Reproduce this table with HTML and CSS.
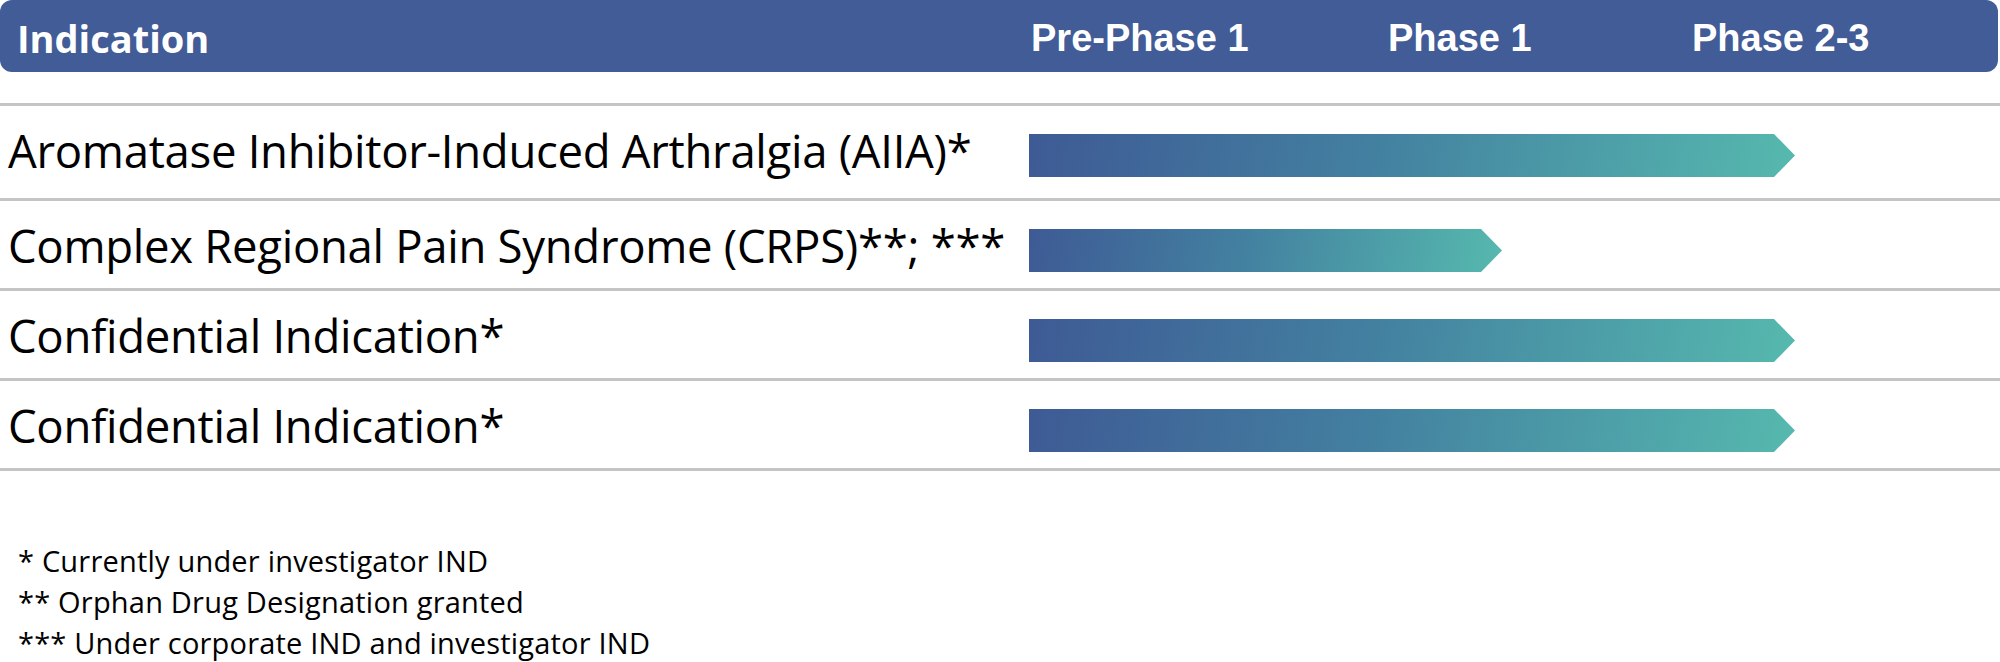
FILE: index.html
```html
<!DOCTYPE html>
<html lang="en">
<head>
<meta charset="utf-8">
<title>Pipeline</title>
<link rel="stylesheet" href="styles.css">
</head>
<body>
<div class="pipeline">
  <div class="head">
    <div class="head-ind">Indication</div>
    <div class="head-phase p0">Pre-Phase 1</div>
    <div class="head-phase p1">Phase 1</div>
    <div class="head-phase p2">Phase 2-3</div>
  </div>
  <div class="rows">
    <div class="row first">
      <div class="ind">Aromatase Inhibitor-Induced Arthralgia (AIIA)*</div>
      <div class="track"><div class="bar" style="width:766px"></div></div>
    </div>
    <div class="row">
      <div class="ind">Complex Regional Pain Syndrome (CRPS)**; ***</div>
      <div class="track"><div class="bar" style="width:473px"></div></div>
    </div>
    <div class="row">
      <div class="ind">Confidential Indication*</div>
      <div class="track"><div class="bar" style="width:766px"></div></div>
    </div>
    <div class="row">
      <div class="ind">Confidential Indication*</div>
      <div class="track"><div class="bar" style="width:766px"></div></div>
    </div>
  </div>
  <div class="notes">
    <p>* Currently under investigator IND</p>
    <p>** Orphan Drug Designation granted</p>
    <p>*** Under corporate IND and investigator IND</p>
  </div>
</div>
</body>
</html>
```
FILE: styles.css
```css
html, body {
  margin: 0;
  padding: 0;
  background: #ffffff;
}
.pipeline {
  width: 2000px;
  font-family: "Open Sans", "Liberation Sans", sans-serif;
  color: #000;
}
.head {
  width: 1998px;
  height: 72px;
  background: #415c96;
  border-radius: 12px;
  display: flex;
  align-items: flex-start;
  color: #fff;
  box-sizing: border-box;
}
.head-ind {
  width: 1029px;
  padding-left: 17px;
  padding-top: 5px;
  box-sizing: border-box;
  font-family: "Open Sans", sans-serif;
  font-weight: 700;
  font-size: 38px;
  line-height: 67px;
  letter-spacing: 0;
}
.head-phase {
  font-family: "Liberation Sans", Arial, sans-serif;
  font-weight: 700;
  font-size: 38px;
  line-height: 67px;
  padding-top: 5px;
  padding-left: 2px;
  box-sizing: border-box;
  letter-spacing: 0;
}
.p0 { width: 357px; }
.p1 { width: 304px; }
.p2 { flex: 1; }
.rows {
  margin-top: 31px;
  border-bottom: 3px solid #c4c4c4;
}
.row {
  display: flex;
  align-items: flex-start;
  border-top: 3px solid #c4c4c4;
  height: 87px;
}
.row.first { height: 92px; }
.ind {
  width: 1029px;
  padding-left: 8px;
  box-sizing: border-box;
  font-size: 45.5px;
  line-height: 43px;
  padding-top: 23px;
  white-space: nowrap;
  letter-spacing: -0.3px;
}
.track {
  padding-top: 28px;
}
.bar {
  height: 43px;
  background: linear-gradient(100deg, #3e5a95 0%, #4380a0 45%, #4d9fa8 75%, #56b9ae 100%);
  clip-path: polygon(0 0, calc(100% - 21px) 0, 100% 50%, calc(100% - 21px) 100%, 0 100%);
}
.notes {
  margin-top: 69px;
  padding-left: 18px;
  font-size: 29px;
  line-height: 41px;
  letter-spacing: 0.2px;
}
.notes p {
  margin: 0;
}
```
